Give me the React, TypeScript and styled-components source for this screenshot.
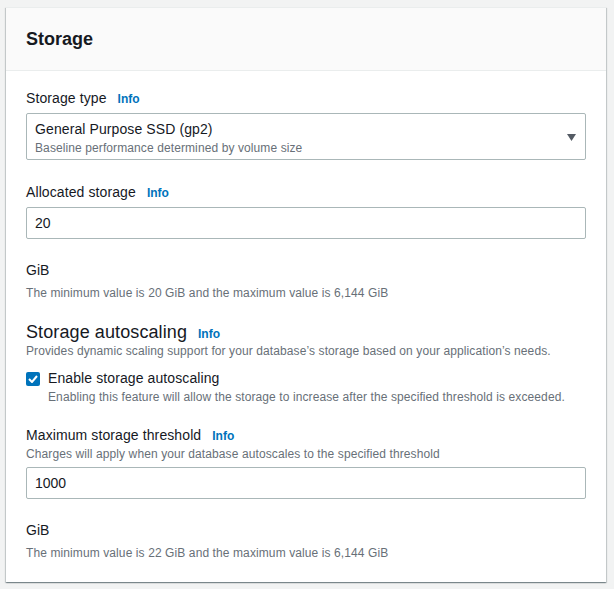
import React from "react";
import styled, { createGlobalStyle } from "styled-components";

const Global = createGlobalStyle`
  html, body { margin: 0; padding: 0; background: #f2f3f3; }
  body { font-family: "Liberation Sans", Arial, sans-serif; color: #16191f; -webkit-font-smoothing: antialiased; }
  * { box-sizing: border-box; }
`;

const Page = styled.div`
  padding: 7px 8px 8px 6px;
`;

const Card = styled.section`
  background: #fff;
  box-shadow: 0 1px 1px 0 rgba(0, 28, 36, 0.3), 1px 1px 1px 0 rgba(0, 28, 36, 0.15),
    -1px 1px 1px 0 rgba(0, 28, 36, 0.15);
  border-top: 1px solid #eaeded;
`;

const Header = styled.header`
  background: #fafafa;
  border-bottom: 1px solid #eaeded;
  height: 63px;
  display: flex;
  align-items: center;
  padding: 0 20px;
`;

const Title = styled.h2`
  margin: 0;
  font-size: 18px;
  font-weight: 700;
  line-height: 22px;
`;

const Body = styled.div`
  padding: 16px 20px 21px;
  display: flex;
  flex-direction: column;
`;

const Field = styled.div<{ $gap?: number }>`
  display: flex;
  flex-direction: column;
  margin-top: ${(p) => p.$gap ?? 0}px;
`;

const LabelRow = styled.div`
  display: flex;
  align-items: baseline;
  gap: 11px;
`;

const Label = styled.label<{ $size?: number }>`
  font-size: ${(p) => p.$size ?? 14}px;
  line-height: 22px;
  letter-spacing: 0.1px;
  color: #16191f;
`;

const Info = styled.a`
  font-size: 12px;
  font-weight: 700;
  color: #0073bb;
  text-decoration: none;
`;

const Desc = styled.div`
  font-size: 12px;
  line-height: 16px;
  letter-spacing: 0.1px;
  color: #687078;
`;

const Select = styled.div`
  margin-top: 4px;
  border: 1px solid #aab7b8;
  border-radius: 2px;
  padding: 4px 30px 3px 8px;
  position: relative;
  display: flex;
  flex-direction: column;
`;

const SelectValue = styled.div`
  font-size: 14px;
  line-height: 22px;
  letter-spacing: 0.1px;
`;

const Caret = styled.svg`
  position: absolute;
  right: 9px;
  top: 20px;
`;

const Input = styled.div<{ $mt?: number }>`
  margin-top: ${(p) => p.$mt ?? 4}px;
  height: 32px;
  border: 1px solid #aab7b8;
  border-radius: 2px;
  padding: 4px 8px;
  font-size: 14px;
  line-height: 22px;
`;

const Unit = styled.div`
  margin-top: 20px;
  font-size: 14px;
  line-height: 22px;
`;

const Constraint = styled(Desc)`
  margin-top: 4px;
`;

const CheckRow = styled.div`
  margin-top: 8px;
  display: grid;
  grid-template-columns: 14px 1fr;
  column-gap: 8px;
`;

const Box = styled.span`
  width: 14px;
  height: 14px;
  margin-top: 5px;
  border-radius: 2px;
  background: #0073bb;
  display: flex;
  align-items: center;
  justify-content: center;
`;

const CheckText = styled.div`
  display: flex;
  flex-direction: column;
`;

export default function App() {
  return (
    <>
      <Global />
      <Page>
        <Card>
          <Header>
            <Title>Storage</Title>
          </Header>
          <Body>
            <Field>
              <LabelRow>
                <Label>Storage type</Label>
                <Info>Info</Info>
              </LabelRow>
              <Select>
                <SelectValue>General Purpose SSD (gp2)</SelectValue>
                <Desc>Baseline performance determined by volume size</Desc>
                <Caret width="9" height="8" viewBox="0 0 9 8">
                  <path d="M0 0 H9 L4.5 7 Z" fill="#545b64" />
                </Caret>
              </Select>
            </Field>

            <Field $gap={21}>
              <LabelRow>
                <Label>Allocated storage</Label>
                <Info>Info</Info>
              </LabelRow>
              <Input>20</Input>
              <Unit>GiB</Unit>
              <Constraint>The minimum value is 20 GiB and the maximum value is 6,144 GiB</Constraint>
            </Field>

            <Field $gap={20}>
              <LabelRow>
                <Label $size={18}>Storage autoscaling</Label>
                <Info>Info</Info>
              </LabelRow>
              <Desc>Provides dynamic scaling support for your database’s storage based on your application’s needs.</Desc>
              <CheckRow>
                <Box>
                  <svg width="10" height="8" viewBox="0 0 10 8">
                    <path d="M1 4 L4 7 L9 1" stroke="#fff" strokeWidth="2" fill="none" />
                  </svg>
                </Box>
                <CheckText>
                  <Label>Enable storage autoscaling</Label>
                  <Desc>Enabling this feature will allow the storage to increase after the specified threshold is exceeded.</Desc>
                </CheckText>
              </CheckRow>
            </Field>

            <Field $gap={19}>
              <LabelRow>
                <Label>Maximum storage threshold</Label>
                <Info>Info</Info>
              </LabelRow>
              <Desc>Charges will apply when your database autoscales to the specified threshold</Desc>
              <Input $mt={5}>1000</Input>
              <Unit>GiB</Unit>
              <Constraint>The minimum value is 22 GiB and the maximum value is 6,144 GiB</Constraint>
            </Field>
          </Body>
        </Card>
      </Page>
    </>
  );
}
